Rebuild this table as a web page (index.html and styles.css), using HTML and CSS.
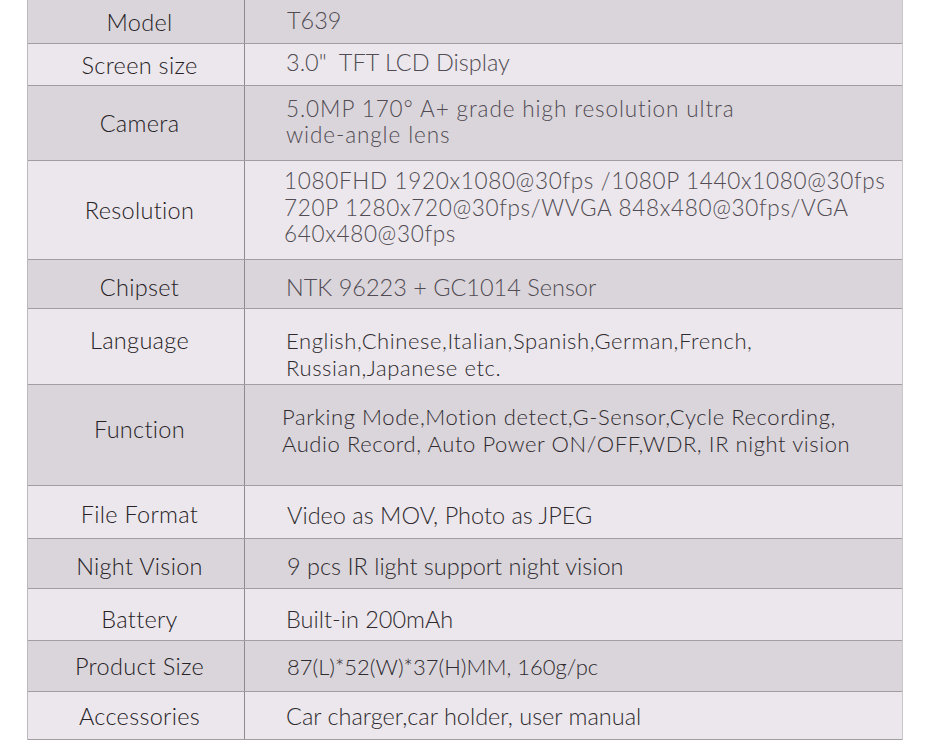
FILE: index.html
```html
<!DOCTYPE html>
<html lang="en">
<head>
<meta charset="utf-8">
<title>T639 Specifications</title>
<link rel="stylesheet" href="styles.css">
</head>
<body>
<div class="spec">
  <div class="row dark r1"><div class="label">Model</div><div class="value soft v-model">T639</div></div>
  <div class="row light r2"><div class="label">Screen size</div><div class="value soft">3.0"&nbsp; TFT LCD Display</div></div>
  <div class="row dark r3"><div class="label">Camera</div><div class="value soft multi v-cam">5.0MP 170° A+ grade high resolution ultra<br>wide-angle lens</div></div>
  <div class="row light r4"><div class="label">Resolution</div><div class="value soft multi v-res">1080FHD 1920x1080@30fps /1080P 1440x1080@30fps<br>720P 1280x720@30fps/WVGA 848x480@30fps/VGA<br>640x480@30fps</div></div>
  <div class="row dark r5"><div class="label">Chipset</div><div class="value soft">NTK 96223 + GC1014 Sensor</div></div>
  <div class="row light r6"><div class="label">Language</div><div class="value multi thin-multi">English,Chinese,Italian,Spanish,German,French,<br>Russian,Japanese etc.</div></div>
  <div class="row dark r7"><div class="label">Function</div><div class="value multi thin-multi v-func">Parking Mode,Motion detect,G-Sensor,Cycle Recording,<br>Audio Record, Auto Power ON/OFF,WDR, IR night vision</div></div>
  <div class="row light r8"><div class="label">File Format</div><div class="value v-wide">Video as MOV, Photo as JPEG</div></div>
  <div class="row dark r9"><div class="label">Night Vision</div><div class="value v-wide">9 pcs IR light support night vision</div></div>
  <div class="row light r10"><div class="label">Battery</div><div class="value">Built-in 200mAh</div></div>
  <div class="row dark r11"><div class="label">Product Size</div><div class="value v-wide v-size">87(L)*52(W)*37(H)MM, 160g/pc</div></div>
  <div class="row light r12"><div class="label">Accessories</div><div class="value">Car charger,car holder, user manual</div></div>
</div>
</body>
</html>
```
FILE: styles.css
```css
html, body {
  margin: 0;
  padding: 0;
  background: #ffffff;
}

body {
  font-family: "Lato", "Open Sans", sans-serif;
  font-size: 23px;
  font-weight: 300;
  color: #2f2b2f;
}

.spec {
  margin-left: 27px;
  width: 876px;
  box-sizing: border-box;
  border-left: 1px solid #bdb9bd;
  border-right: 1px solid #c9c5c9;
}

.row {
  display: grid;
  grid-template-columns: 217px 1fr;
  box-sizing: border-box;
  border-bottom: 1px solid #a19da1;
}

.dark { background: #dad5db; }
.light { background: #ebe7ec; }

.label {
  box-sizing: border-box;
  border-right: 1px solid #8e8a8e;
  display: flex;
  align-items: center;
  justify-content: center;
  padding-left: 7px;
  white-space: nowrap;
  font-size: 23.5px;
  letter-spacing: 0.3px;
  color: #262226;
}

.value {
  display: flex;
  align-items: center;
  padding-left: 41px;
  white-space: nowrap;
  font-size: 23.5px;
  letter-spacing: 0;
  color: #2f2b2f;
}

.soft {
  font-size: 23.5px;
  letter-spacing: 0;
  color: #514c53;
}

.multi {
  font-size: 22px;
  line-height: 26.4px;
  letter-spacing: 0.4px;
}

.thin-multi { letter-spacing: 0.58px; }

.v-model { padding-left: 42px; }
.v-cam { font-size: 22.5px; letter-spacing: 0.9px; }
.v-res { padding-left: 39px; font-size: 22.5px; letter-spacing: 0.68px; }
.v-func { padding-left: 37px; }
.v-wide { padding-left: 42px; }
.v-size { font-size: 22px; }

.r1 { height: 44px; }
.r2 { height: 42px; }
.r3 { height: 75px; }
.r4 { height: 99px; }
.r5 { height: 49px; }
.r6 { height: 76px; }
.r7 { height: 101px; }
.r8 { height: 53px; }
.r9 { height: 50px; }
.r10 { height: 52px; }
.r11 { height: 51px; }
.r12 { height: 48px; }

.r1 .value { padding-bottom: 3px; }
.r2 .value { padding-bottom: 5px; }
.r3 .value { padding-bottom: 2px; }
.r4 .value { padding-bottom: 4px; }
.r5 .label, .r5 .value { padding-top: 6px; }
.r6 .label { padding-bottom: 14px; }
.r6 .value { padding-top: 16px; }
.r7 .label { padding-bottom: 13px; }
.r7 .value { padding-bottom: 9px; }
.r8 .label { padding-top: 4px; }
.r8 .value { padding-top: 5px; }
.r9 .label, .r9 .value { padding-top: 4px; }
.r10 .label, .r10 .value { padding-top: 8px; }
```
